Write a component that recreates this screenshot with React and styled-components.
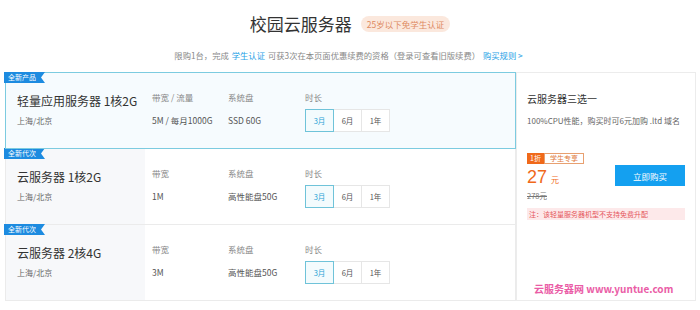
import React, { useState } from "react";
import styled, { createGlobalStyle } from "styled-components";

const GlobalStyle = createGlobalStyle`
  body {
    margin: 0;
    background: #fff;
    font-family: "Noto Sans CJK SC", "Noto Sans", sans-serif;
    color: #333;
  }
`;

const Page = styled.div`
  width: 700px;
  height: 310px;
  overflow: hidden;
`;

const Header = styled.header`
  height: 72px;
  box-sizing: border-box;
  padding-top: 8px;
`;

const TitleRow = styled.div`
  display: flex;
  justify-content: center;
  align-items: center;
  gap: 9px;
  height: 32px;
`;

const Title = styled.h1`
  margin: 0;
  font-size: 17px;
  font-weight: 400;
  line-height: 32px;
  color: #333;
`;

const Pill = styled.span`
  height: 16px;
  line-height: 16px;
  padding: 0 6px;
  border-radius: 8px;
  background: #fbe8dd;
  color: #de8a62;
  font-size: 8.5px;
`;

const SubLine = styled.p`
  margin: 8px 0 0;
  text-align: center;
  font-size: 8.3px;
  line-height: 14px;
  color: #888;
`;

const TextLink = styled.span`
  color: #1f9fe6;
  margin: 0 3px;
`;

const Main = styled.div`
  display: flex;
  padding-left: 5px;
  align-items: flex-start;
`;

const List = styled.div`
  width: 511px;
  display: flex;
  flex-direction: column;
`;

const Row = styled.div`
  position: relative;
  display: flex;
  height: 77px;
  box-sizing: border-box;
  border: 1px solid ${(p) => (p.$active ? "#7ccbe0" : "#ebebeb")};
  background: ${(p) => (p.$active ? "#f6fbfe" : "#fff")};
  z-index: ${(p) => (p.$active ? 1 : 0)};
  & + & {
    margin-top: -1px;
  }
`;

const Badge = styled.span`
  position: absolute;
  top: -1px;
  left: -2px;
  height: 11px;
  line-height: 11px;
  padding: 0 9px 0 4px;
  background: #1d8be0;
  color: #fff;
  font-size: 7px;
  clip-path: polygon(0 0, 100% 0, calc(100% - 4px) 50%, 100% 100%, 0 100%);
`;

const NameCell = styled.div`
  width: 139px;
  box-sizing: border-box;
  padding: 18px 0 0 11px;
  background: ${(p) => (p.$active ? "transparent" : "#f7f8fa")};
`;

const Name = styled.div`
  font-size: 12px;
  line-height: 20px;
  color: #333;
`;

const Region = styled.div`
  font-size: 8px;
  line-height: 20px;
  color: #666;
`;

const Specs = styled.div`
  display: flex;
  padding: 17px 0 0 7px;
`;

const SpecCol = styled.div`
  width: ${(p) => p.$w}px;
  display: flex;
  flex-direction: column;
`;

const SpecLabel = styled.div`
  font-size: 8.5px;
  line-height: 14px;
  color: #888;
`;

const SpecValue = styled.div`
  margin-top: 5px;
  font-size: 8.5px;
  line-height: 22px;
  color: #555;
`;

const Durations = styled.div`
  display: flex;
  margin-top: 5px;
`;

const DurationBtn = styled.button`
  position: relative;
  width: 29px;
  height: 23px;
  box-sizing: border-box;
  padding: 0;
  border: 1px solid ${(p) => (p.$on ? "#6fc3d9" : "#e6e6e6")};
  background: ${(p) => (p.$on ? "#f3fbfd" : "#fff")};
  color: ${(p) => (p.$on ? "#2ba3d6" : "#555")};
  font-family: inherit;
  font-size: 7.5px;
  cursor: pointer;
  z-index: ${(p) => (p.$on ? 1 : 0)};
  & + & {
    margin-left: -1px;
  }
`;

const Side = styled.aside`
  width: 180px;
  height: 229px;
  box-sizing: border-box;
  border: 1px solid #ececec;
  padding: 18px 10px 0 10px;
  display: flex;
  flex-direction: column;
`;

const SideTitle = styled.div`
  font-size: 10px;
  line-height: 16px;
  color: #333;
`;

const SideDesc = styled.div`
  margin-top: 8px;
  font-size: 8px;
  line-height: 12px;
  color: #666;
  white-space: nowrap;
`;

const PriceArea = styled.div`
  display: flex;
  justify-content: space-between;
  align-items: flex-start;
  margin-top: 26px;
`;

const PriceCol = styled.div`
  display: flex;
  flex-direction: column;
`;

const Tags = styled.div`
  display: flex;
  height: 11px;
`;

const DiscountTag = styled.span`
  padding: 0 3px;
  background: #f0691a;
  color: #fff;
  font-size: 7px;
  line-height: 11px;
`;

const StudentTag = styled.span`
  padding: 0 5px;
  box-sizing: border-box;
  border: 1px solid #e8a070;
  color: #e07a3c;
  font-size: 7px;
  line-height: 9px;
  background: #fff;
`;

const Price = styled.div`
  margin-top: 3px;
  color: #f0691a;
  font-size: 18px;
  line-height: 20px;
  font-family: "Liberation Sans", "Noto Sans CJK SC", sans-serif;
  small {
    font-size: 8px;
    margin-left: 4px;
    font-family: "Noto Sans CJK SC", sans-serif;
  }
`;

const OldPrice = styled.div`
  font-size: 7.5px;
  line-height: 12px;
  color: #777;
  text-decoration: line-through;
`;

const BuyButton = styled.button`
  margin-top: 12px;
  width: 70px;
  height: 21px;
  border: 0;
  background: #14a0f0;
  color: #fff;
  font-family: inherit;
  font-size: 8.5px;
  cursor: pointer;
`;

const Notice = styled.div`
  margin-top: 6px;
  padding-left: 2px;
  height: 12px;
  line-height: 12px;
  background: #fde9ea;
  color: #e5585d;
  font-size: 7px;
`;

const Watermark = styled.div`
  margin-top: auto;
  margin-bottom: 4px;
  padding-left: 7px;
  font-size: 10px;
  line-height: 14px;
  font-weight: 700;
  color: #ea5ca6;
  white-space: nowrap;
`;

const products = [
  {
    tag: "全新产品",
    name: "轻量应用服务器 1核2G",
    bwLabel: "带宽 / 流量",
    bw: "5M / 每月1000G",
    disk: "SSD 60G",
  },
  {
    tag: "全新代次",
    name: "云服务器 1核2G",
    bwLabel: "带宽",
    bw: "1M",
    disk: "高性能盘50G",
  },
  {
    tag: "全新代次",
    name: "云服务器 2核4G",
    bwLabel: "带宽",
    bw: "3M",
    disk: "高性能盘50G",
  },
];

const durations = ["3月", "6月", "1年"];

export default function App() {
  const [active, setActive] = useState(0);

  return (
    <Page>
      <GlobalStyle />
      <Header>
        <TitleRow>
          <Title>校园云服务器</Title>
          <Pill>25岁以下免学生认证</Pill>
        </TitleRow>
        <SubLine>
          限购1台，完成<TextLink>学生认证</TextLink>可获3次在本页面优惠续费的资格（登录可查看旧版续费）
          <TextLink>购买规则 &gt;</TextLink>
        </SubLine>
      </Header>
      <Main>
        <List>
          {products.map((p, i) => (
            <Row key={i} $active={i === active} onClick={() => setActive(i)}>
              <Badge>{p.tag}</Badge>
              <NameCell $active={i === active}>
                <Name>{p.name}</Name>
                <Region>上海/北京</Region>
              </NameCell>
              <Specs>
                <SpecCol $w={76}>
                  <SpecLabel>{p.bwLabel}</SpecLabel>
                  <SpecValue>{p.bw}</SpecValue>
                </SpecCol>
                <SpecCol $w={77}>
                  <SpecLabel>系统盘</SpecLabel>
                  <SpecValue>{p.disk}</SpecValue>
                </SpecCol>
                <SpecCol $w={100}>
                  <SpecLabel>时长</SpecLabel>
                  <Durations>
                    {durations.map((d, j) => (
                      <DurationBtn key={d} $on={j === 0}>
                        {d}
                      </DurationBtn>
                    ))}
                  </Durations>
                </SpecCol>
              </Specs>
            </Row>
          ))}
        </List>
        <Side>
          <SideTitle>云服务器三选一</SideTitle>
          <SideDesc>100%CPU性能，购买时可6元加购 .ltd 域名</SideDesc>
          <PriceArea>
            <PriceCol>
              <Tags>
                <DiscountTag>1折</DiscountTag>
                <StudentTag>学生专享</StudentTag>
              </Tags>
              <Price>
                27<small>元</small>
              </Price>
              <OldPrice>278元</OldPrice>
            </PriceCol>
            <BuyButton>立即购买</BuyButton>
          </PriceArea>
          <Notice>注：该轻量服务器机型不支持免费升配</Notice>
          <Watermark>云服务器网 www.yuntue.com</Watermark>
        </Side>
      </Main>
    </Page>
  );
}
